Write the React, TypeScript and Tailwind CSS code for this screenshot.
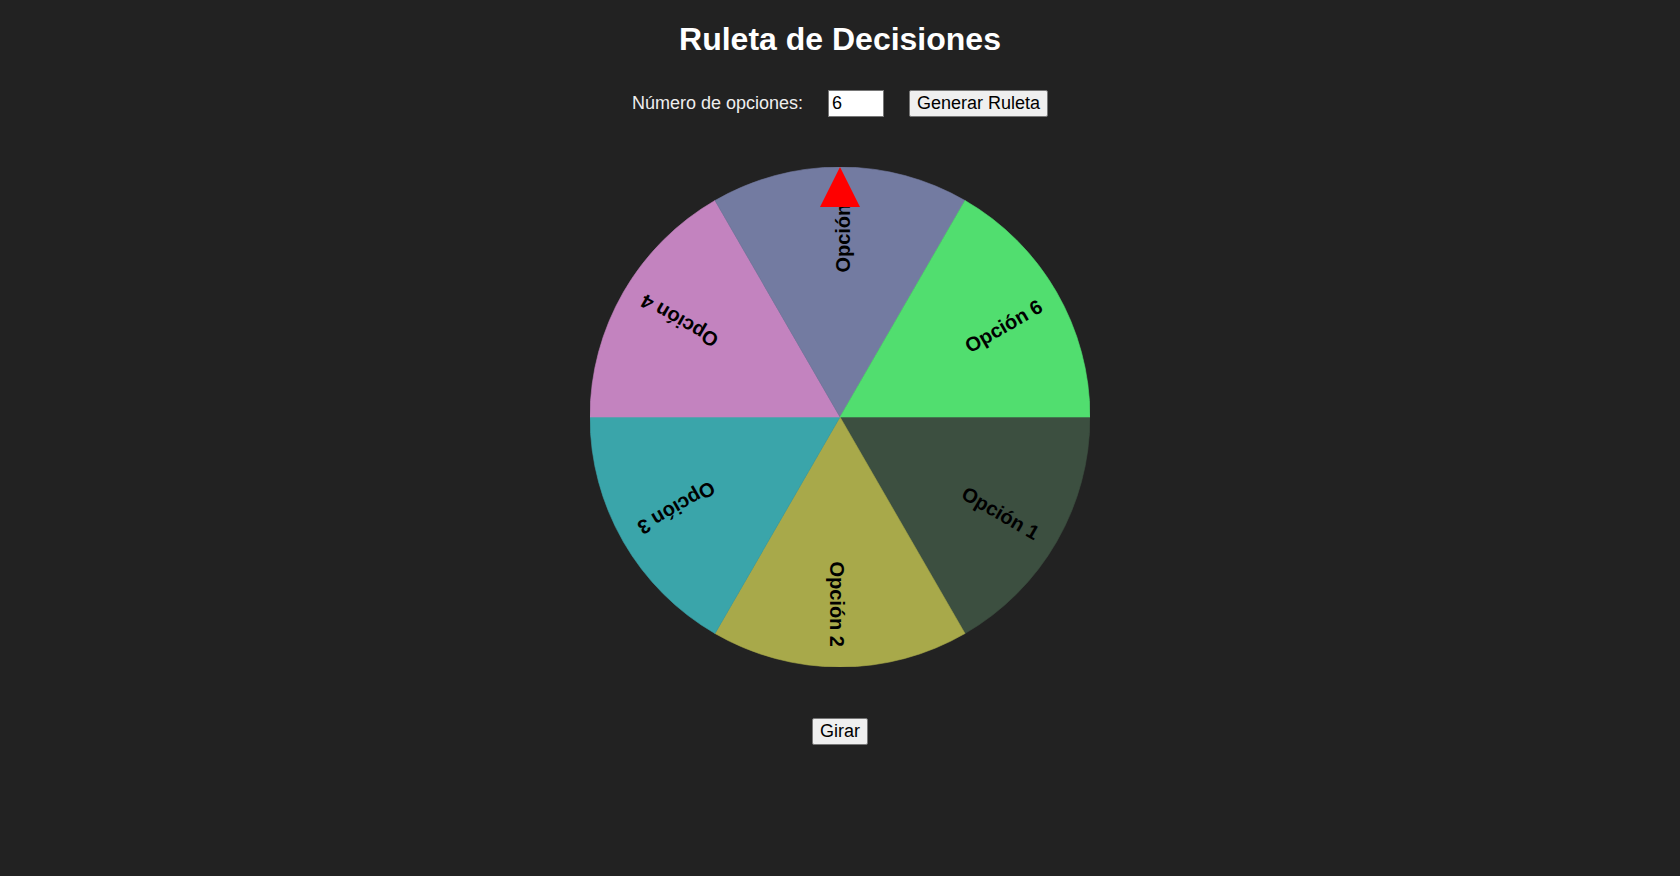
import React, { useState } from 'react';

const COLORS = ['#3c4f40', '#a8a94a', '#3aa5aa', '#c383bf', '#737ba1', '#51de6f'];

const SIZE = 500;
const R = 250;

// one pie slice from angle a0 to a1 (degrees, clockwise from 3 o'clock)
const slicePath = (a0: number, a1: number) => {
  const r0 = (a0 * Math.PI) / 180;
  const r1 = (a1 * Math.PI) / 180;
  const x0 = R + R * Math.cos(r0);
  const y0 = R + R * Math.sin(r0);
  const x1 = R + R * Math.cos(r1);
  const y1 = R + R * Math.sin(r1);
  const large = a1 - a0 > 180 ? 1 : 0;
  return `M${R},${R} L${x0},${y0} A${R},${R} 0 ${large} 1 ${x1},${y1} Z`;
};

const Wheel = ({ count }: { count: number }) => {
  const arc = 360 / count;
  return (
    <div className="relative w-[500px] h-[500px]">
      <svg width={SIZE} height={SIZE} viewBox={`0 0 ${SIZE} ${SIZE}`} className="block">
        {Array.from({ length: count }, (_, i) => (
          <path
            key={i}
            d={slicePath(i * arc, (i + 1) * arc)}
            fill={COLORS[i % COLORS.length]}
            stroke={COLORS[i % COLORS.length]}
            strokeWidth={0.6}
            strokeLinejoin="round"
          />
        ))}
        {Array.from({ length: count }, (_, i) => (
          <g key={`t${i}`} transform={`translate(${R} ${R}) rotate(${i * arc + arc / 2})`}>
            <text
              x={R - 20}
              y={10}
              textAnchor="end"
              fontFamily="'Liberation Sans', Arial, sans-serif"
              fontWeight="bold"
              fontSize="20"
              fill="#000"
            >
              {`Opción ${i + 1}`}
            </text>
          </g>
        ))}
      </svg>
      <svg width="40" height="40" viewBox="0 0 40 40" className="absolute left-[230px] top-0">
        <polygon points="20,0 40,40 0,40" fill="#ff0000" />
      </svg>
    </div>
  );
};

export default function App() {
  const [count, setCount] = useState('6');
  const [slices, setSlices] = useState(6);

  return (
    <div className="min-h-[876px] bg-[#222222] flex flex-col items-center font-['Liberation_Sans',Arial,sans-serif]">
      <h1 className="mt-[21px] text-[32px] leading-[37px] font-bold text-white">Ruleta de Decisiones</h1>

      <div className="mt-[32px] flex items-center h-[27px]">
        <label htmlFor="opciones" className="text-[18px] text-[#eeeeee] leading-[21px]">
          Número de opciones:
        </label>
        <input
          id="opciones"
          type="number"
          value={count}
          onChange={(e) => setCount(e.target.value)}
          className="ml-[25px] w-[56px] h-[27px] bg-white border border-[#767676] px-[3px] text-[18px] text-black outline-none [appearance:textfield] [&::-webkit-inner-spin-button]:appearance-none"
        />
        <button
          onClick={() => setSlices(Math.max(2, parseInt(count) || 6))}
          className="ml-[25px] w-[139px] h-[27px] bg-[#efefef] border border-[#767676] rounded-[2px] text-[18px] text-black leading-[21px]"
        >
          Generar Ruleta
        </button>
      </div>

      <div className="mt-[50px]">
        <Wheel count={slices} />
      </div>

      <button className="mt-[51px] w-[56px] h-[27px] bg-[#efefef] border border-[#767676] rounded-[2px] text-[18px] text-black leading-[21px]">
        Girar
      </button>
    </div>
  );
}
